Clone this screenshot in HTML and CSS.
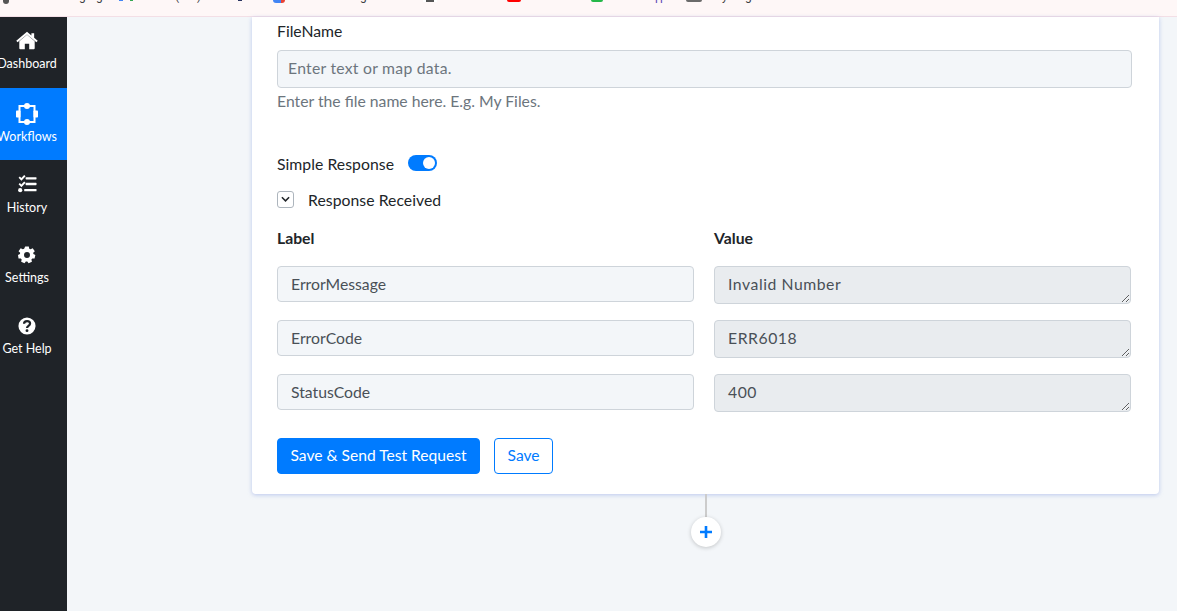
FILE: index.html
```html
<!DOCTYPE html>
<html lang="en">
<head>
<meta charset="utf-8">
<title>Workflows</title>
<link rel="stylesheet" href="styles.css">
</head>
<body>
<div class="bookmarks">
  <div class="bm-row">
    <span class="blk blk-app"></span><span>g</span><span>g</span><span class="blk blk-blue"></span><span class="blk blk-green"></span><span>(</span><span>)</span><span class="blk blk-navy"></span><span class="blk blk-doc"></span><span>g</span><span class="blk blk-gray"></span><span class="blk blk-red"></span><span class="blk blk-wa"></span><span class="tint">p</span><span class="tint">p</span><span class="blk blk-box"></span><span>y</span><span>g</span>
  </div>
</div>
<div class="app">
  <nav class="sidebar">
    <a class="nav-item">
      <svg class="nav-icon icon-home" viewBox="0 0 24 20"><path fill="#fff" d="M12 3.200 3.600 10.200V18c0 .6.400 1 1 1h5V13h4.800v6h5c.6 0 1-.4 1-1v-7.800L12 3.200zM12 0 .3 9.700l1.400 1.700L12 2.900l10.300 8.500 1.400-1.700L19.800 6.500V1.500h-3v2.500L12 0z"/></svg>
      <span>Dashboard</span>
    </a>
    <a class="nav-item active">
      <svg class="nav-icon icon-flow" viewBox="0 0 22 22"><g fill="#fff"><rect x="3.500" y="3" width="15" height="16" fill="none" stroke="#fff" stroke-width="2"/><circle cx="11" cy="3" r="3"/><circle cx="11" cy="19" r="3"/><rect y="7.500" width="4.500" height="7" rx=".8"/><rect x="17.500" y="7.500" width="4.500" height="7" rx=".8"/></g></svg>
      <span>Workflows</span>
    </a>
    <a class="nav-item history">
      <svg class="nav-icon" viewBox="0 0 20 20"><g fill="#fff"><path d="M.6 3.500 2 2.200l1.500 1.500L6.500.5 8 1.800 3.600 6.700z"/><path d="M.6 10.300 2 9l1.500 1.500 3-3.200L8 8.600 3.600 13.500z"/><circle cx="2.300" cy="16.500" r="2.200"/><rect x="8" y="2.800" width="11.500" height="2.400" rx=".6"/><rect x="8" y="8.800" width="11.500" height="2.400" rx=".6"/><rect x="6.500" y="15.300" width="13" height="2.400" rx=".6"/></g></svg>
      <span>History</span>
    </a>
    <a class="nav-item">
      <svg class="nav-icon" viewBox="0 0 20 20"><path fill="#fff" fill-rule="evenodd" d="M8 .5h4l.5 2.500 1.500.7 2.300-1.200 2.400 3.300-1.800 1.800.2 1.400 2.200 1-.9 3.900-2.500-.1-1 1.200.6 2.500-3.700 1.700-1.500-2.100h-1.600l-1.500 2.100-3.700-1.700.6-2.500-1-1.200-2.500.1L0 10l2.200-1 .2-1.400L.6 5.800 3 2.500l2.300 1.200 1.500-.7zM10 6.700a3.300 3.300 0 1 0 0 6.600 3.300 3.300 0 0 0 0-6.600z"/></svg>
      <span>Settings</span>
    </a>
    <a class="nav-item">
      <svg class="nav-icon" viewBox="0 0 20 20"><circle cx="10" cy="10" r="9.500" fill="#fff"/><path fill="none" stroke="#1f2328" stroke-width="2.500" d="M6.700 7.600c0-2 1.500-3.100 3.400-3.100s3.300 1.100 3.300 2.800c0 2.600-3.400 2.500-3.400 5"/><circle cx="10" cy="15.200" r="1.600" fill="#1f2328"/></svg>
      <span>Get Help</span>
    </a>
  </nav>
  <main class="canvas">
    <section class="card">
      <label class="field-label">FileName</label>
      <input class="text-input" type="text" placeholder="Enter text or map data.">
      <p class="help">Enter the file name here. E.g. My Files.</p>
      <div class="switch-row">
        <span>Simple Response</span>
        <span class="switch"><span class="knob"></span></span>
      </div>
      <div class="collapse-row">
        <span class="chevron-box"><svg viewBox="0 0 10 6" class="chevron"><path d="M1 1l4 4 4-4" fill="none" stroke="#212529" stroke-width="1.700"/></svg></span>
        <span>Response Received</span>
      </div>
      <div class="grid">
        <div class="head">Label</div>
        <div class="head">Value</div>
        <input class="cell" type="text" value="ErrorMessage">
        <textarea class="value" readonly>Invalid Number</textarea>
        <input class="cell" type="text" value="ErrorCode">
        <textarea class="value" readonly>ERR6018</textarea>
        <input class="cell" type="text" value="StatusCode">
        <textarea class="value" readonly>400</textarea>
      </div>
      <div class="actions">
        <button class="btn primary">Save &amp; Send Test Request</button>
        <button class="btn outline">Save</button>
      </div>
    </section>
    <div class="connector"></div>
    <button class="add" aria-label="Add step"><svg viewBox="0 0 14 14" class="plus"><path d="M7 1v12M1 7h12" stroke="#007bff" stroke-width="2.600" fill="none"/></svg></button>
  </main>
</div>
</body>
</html>
```

FILE: styles.css
```css
* { box-sizing: border-box; }
html, body { height: 100%; }
body {
  margin: 0;
  overflow: hidden;
  background: #f3f6f9;
  font-family: "Lato", "Noto Sans", sans-serif;
  color: #212529;
  font-size: 15.750px;
  display: flex;
  flex-direction: column;
}
.bookmarks {
  height: 17px;
  flex: none;
  background: #fef7f7;
  border-bottom: 1px solid #f3dfe6;
  overflow: hidden;
}
.bm-row {
  display: grid;
  grid-template-columns: 76px 17px 23px 11px 45px 22px 41px 35px 87px 63px 84px 84px 64px 5px 26px 36px 23px 20px;
  align-items: start;
  margin-top: -10px;
  padding-left: 3px;
  font: 12px/12px "Roboto", sans-serif;
  color: #3c4043;
}
.tint { color: #5f4bb6; }
.blk { display: block; margin-top: 10px; height: 2px; }
.blk-app { width: 6px; height: 4px; background: #555; border-radius: 0 0 3px 3px; }
.blk-blue { width: 4px; height: 1px; background: #4285f4; }
.blk-green { width: 3px; height: 1px; background: #34a853; }
.blk-navy { width: 4px; height: 1px; background: #2a3560; }
.blk-doc { width: 12px; height: 3px; background: linear-gradient(90deg, #4285f4 70%, #ea4335 70%); border-radius: 0 0 3px 3px; }
.blk-gray { width: 14px; background: linear-gradient(90deg, #fff 20%, #555 20%, #555 80%, #fff 80%); }
.blk-red { width: 14px; background: #f00; border-radius: 0 0 3px 3px; }
.blk-wa { width: 12px; background: #25b84a; border-radius: 0 0 5px 5px; }
.blk-box { width: 16px; background: #6b6b6b; border-radius: 0 0 2px 2px; }
.app { flex: 1; display: flex; min-height: 0; }
.sidebar {
  width: 67px;
  flex: none;
  background: #1f2328;
  color: #fff;
  display: flex;
  flex-direction: column;
}
.nav-item {
  height: 71px;
  display: flex;
  flex-direction: column;
  align-items: center;
  padding: 14px 13px 0 0;
  font-size: 12.500px;
  line-height: 16px;
  white-space: nowrap;
  overflow: hidden;
}
.nav-item.active { background: #007bff; height: 72px; padding-top: 16px; }
.nav-icon { width: 18px; height: 20px; margin-bottom: 5px; flex: none; }
.icon-home { width: 22px; }
.icon-flow { width: 22px; height: 22px; margin: -1px 0 4px; }
.history .nav-icon { width: 19px; margin-bottom: 6px; }
.canvas {
  flex: 1;
  min-width: 0;
  display: flex;
  flex-direction: column;
  align-items: flex-start;
  padding-left: 185px;
}
.card {
  width: 907px;
  height: 477px;
  background: #fff;
  border-radius: 0 0 4px 4px;
  box-shadow: 0 1px 4px rgba(140, 160, 225, .55);
  padding: 5px 27px 0 25px;
  flex: none;
}
.field-label { display: block; line-height: 18px; margin-bottom: 10px; }
.text-input {
  display: block;
  width: 855px;
  height: 38px;
  background: #f3f6f9;
  border: 1px solid #ced4da;
  border-radius: 4px;
  padding: 0 10px 3px;
  font: inherit;
  letter-spacing: .25px;
}
.text-input::placeholder { color: #6c757d; opacity: 1; }
.help { margin: 4px 0 0; color: #6c757d; line-height: 18px; }
.switch-row {
  margin-top: 44px;
  display: flex;
  align-items: center;
  gap: 14px;
  height: 18px;
  letter-spacing: .05px;
}
.switch {
  width: 29px;
  height: 16px;
  border-radius: 8px;
  background: #007bff;
  display: flex;
  justify-content: flex-end;
  align-items: center;
  padding-right: 2px;
}
.knob { width: 12px; height: 12px; border-radius: 50%; background: #fff; }
.collapse-row {
  margin-top: 18px;
  display: flex;
  align-items: center;
  gap: 14px;
  height: 18px;
  letter-spacing: .05px;
}
.chevron-box {
  width: 17px;
  height: 17px;
  border: 1px solid #adb5bd;
  border-radius: 3px;
  display: flex;
  align-items: center;
  justify-content: center;
}
.chevron { width: 9px; height: 6px; }
.grid {
  margin-top: 21px;
  display: grid;
  grid-template-columns: 417px 417px;
  column-gap: 20px;
  align-items: start;
}
.head { font-weight: 700; line-height: 18px; margin-bottom: 19px; }
.cell, .value {
  display: block;
  width: 100%;
  border: 1px solid #ced4da;
  border-radius: 4px;
  font: inherit;
  color: #495057;
}
.cell {
  height: 36px;
  background: #f3f6f9;
  padding: 0 13px 2px;
  margin-bottom: 18px;
}
.value {
  height: 38px;
  background: #e9ecef;
  padding: 7px 13px;
  line-height: 20px;
  letter-spacing: .55px;
  margin-bottom: 16px;
  resize: vertical;
  overflow: hidden;
}
.actions { margin-top: 10px; display: flex; gap: 14px; }
.btn {
  height: 36px;
  border-radius: 4px;
  font: inherit;
  font-size: 15.600px;
  padding: 0 12.500px 3px;
  border: 1px solid #007bff;
}
.primary { background: #007bff; color: #fff; }
.outline { background: #fff; color: #007bff; }
.connector {
  width: 2px;
  height: 24px;
  background: #ccc;
  margin-left: 453px;
  flex: none;
}
.add {
  width: 30px;
  height: 30px;
  margin: -1px 0 0 439px;
  border: 0;
  padding: 0;
  border-radius: 50%;
  background: #fff;
  box-shadow: 0 1px 4px rgba(0, 0, 0, .2);
  display: flex;
  align-items: center;
  justify-content: center;
  flex: none;
}
.plus { width: 14px; height: 14px; }
```
